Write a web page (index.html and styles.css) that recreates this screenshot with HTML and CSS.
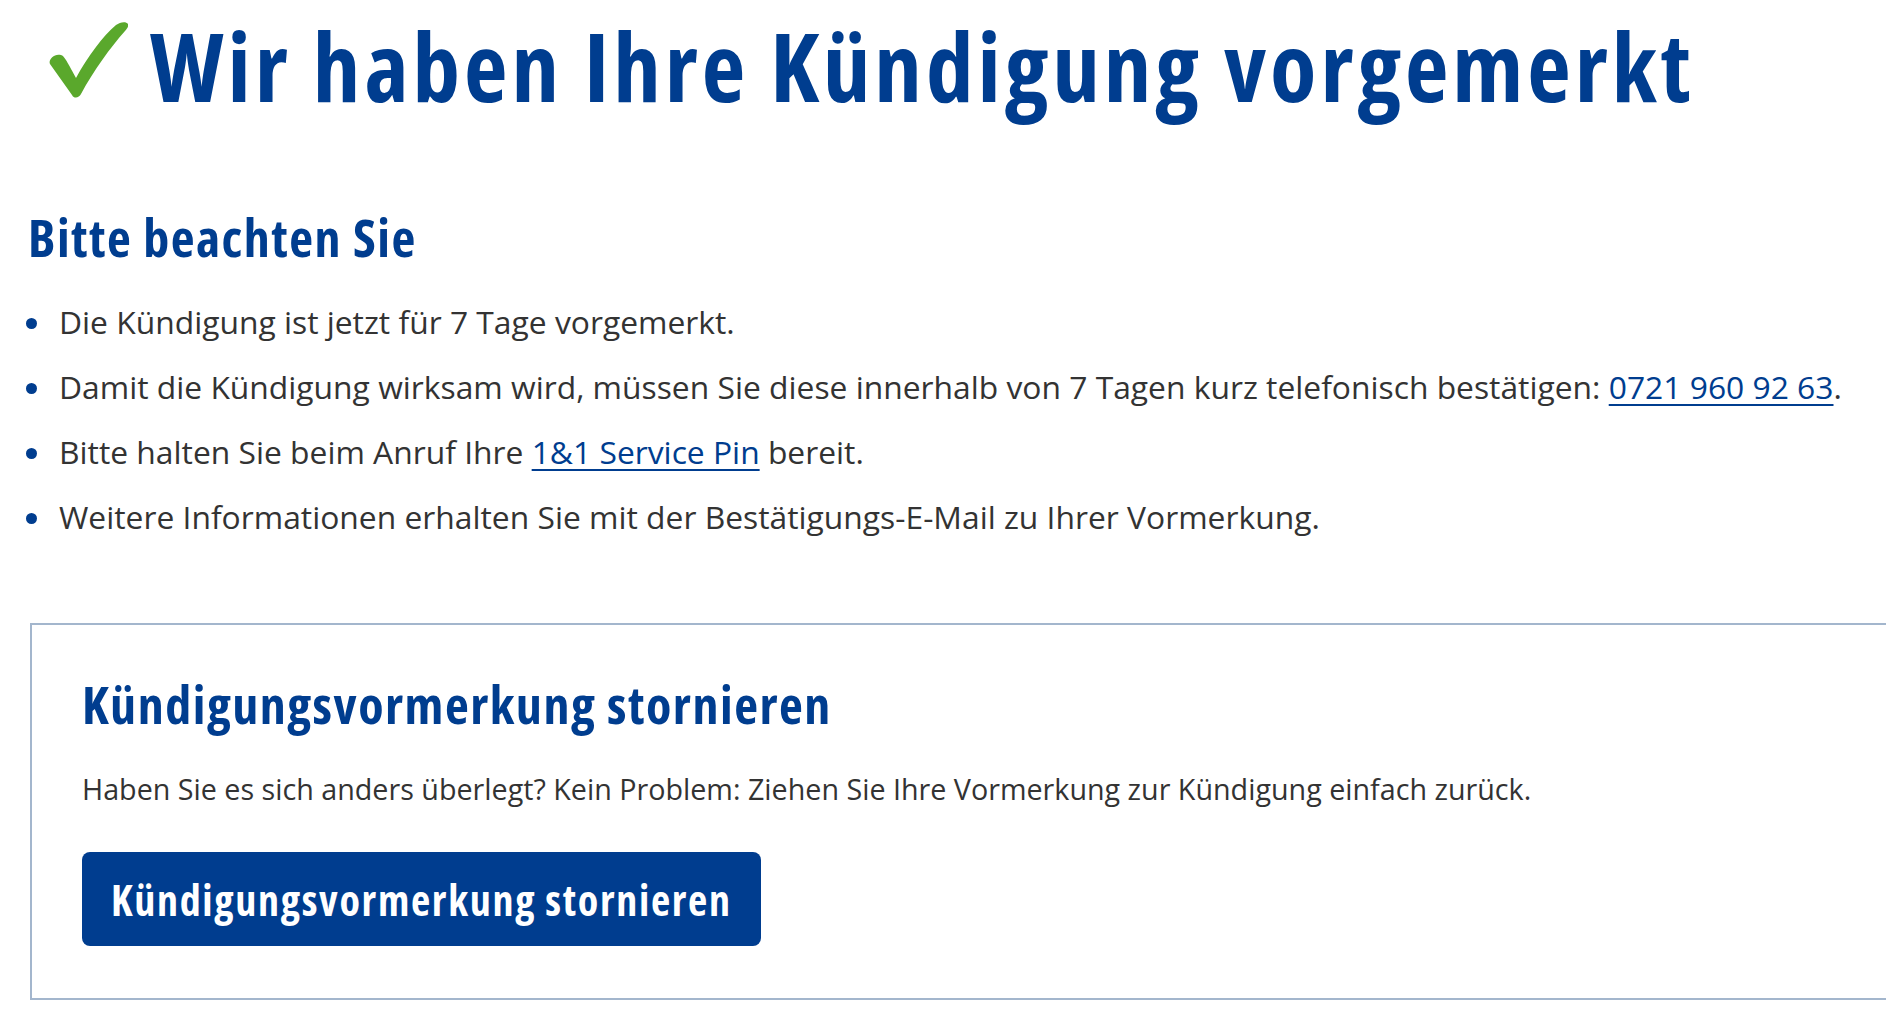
FILE: index.html
```html
<!DOCTYPE html>
<html lang="de">
<head>
<meta charset="utf-8">
<title>Kündigung vorgemerkt</title>
<link rel="stylesheet" href="styles.css">
</head>
<body>
<main class="page">
  <h1 class="title">
    <svg class="check" viewBox="0 0 80 76" width="80" height="76" aria-hidden="true">
      <path d="M2,42 C0,38 6,31 13,33 C16,34 18,37 28,56 C40,34 55,14 68,3 C72,0 78,-1 80,2 C81,4 79,7 77,9 C62,26 46,48 33,72 C31,76 26,77 24,73 Z" fill="#5aa82c"/>
    </svg>
    <span>Wir haben Ihre Kündigung vorgemerkt</span>
  </h1>

  <h2 class="subtitle">Bitte beachten Sie</h2>
  <ul class="notes">
    <li>Die Kündigung ist jetzt für 7 Tage vorgemerkt.</li>
    <li>Damit die Kündigung wirksam wird, müssen Sie diese innerhalb von 7 Tagen kurz telefonisch bestätigen: <a href="#">0721 960 92 63</a>.</li>
    <li>Bitte halten Sie beim Anruf Ihre <a href="#">1&amp;1 Service Pin</a> bereit.</li>
    <li>Weitere Informationen erhalten Sie mit der Bestätigungs-E-Mail zu Ihrer Vormerkung.</li>
  </ul>

  <section class="box">
    <h2 class="box-title">Kündigungsvormerkung stornieren</h2>
    <p class="box-text">Haben Sie es sich anders überlegt? Kein Problem: Ziehen Sie Ihre Vormerkung zur Kündigung einfach zurück.</p>
    <button class="btn" type="button">Kündigungsvormerkung stornieren</button>
  </section>
</main>
</body>
</html>
```
FILE: styles.css
```css
html, body {
  margin: 0;
  padding: 0;
  background: #ffffff;
  overflow-x: hidden;
}

body {
  font-family: "Open Sans", "Noto Sans", sans-serif;
  color: #333333;
}

.page {
  padding: 0 0 0 28px;
}

.title {
  display: flex;
  align-items: flex-start;
  gap: 22px;
  margin: 20px 0 0 20px;
  font-size: 95px;
  line-height: 91px;
  font-weight: 700;
  font-stretch: condensed;
  letter-spacing: 4px;
  color: #003d8f;
  white-space: nowrap;
}

.check {
  flex: none;
  margin-top: 2px;
}

.subtitle {
  margin: 96px 0 0 0;
  font-size: 52px;
  line-height: 59px;
  font-weight: 700;
  font-stretch: condensed;
  letter-spacing: 1.5px;
  color: #003d8f;
}

.notes {
  margin: 23px 0 0 0;
  padding: 0 0 0 31px;
  list-style: none;
  font-size: 31.8px;
  line-height: 65px;
  white-space: nowrap;
}

.notes li {
  position: relative;
}

.notes li::before {
  content: "";
  position: absolute;
  left: -33px;
  top: 29px;
  width: 11px;
  height: 11px;
  border-radius: 50%;
  background: #003d8f;
}

.notes a {
  color: #003d8f;
  text-decoration: underline;
  text-decoration-thickness: 2px;
  text-underline-offset: 5px;
}

.box {
  margin: 74px -80px 0 2px;
  border: 2px solid #a3b6cd;
  padding: 49px 50px 52px 50px;
}

.box-title {
  margin: 0;
  font-size: 52px;
  line-height: 59px;
  font-weight: 700;
  font-stretch: condensed;
  letter-spacing: 1.5px;
  color: #003d8f;
}

.box-text {
  margin: 35px 0 0 0;
  font-size: 28.7px;
  line-height: 42px;
}

.btn {
  display: inline-flex;
  align-items: center;
  height: 94px;
  margin-top: 42px;
  padding: 0 29px;
  border: 0;
  border-radius: 8px;
  background: #003d8f;
  color: #ffffff;
  font-family: "Open Sans", "Noto Sans", sans-serif;
  font-size: 42px;
  font-weight: 700;
  font-stretch: condensed;
  letter-spacing: 1.7px;
  cursor: pointer;
}
```
